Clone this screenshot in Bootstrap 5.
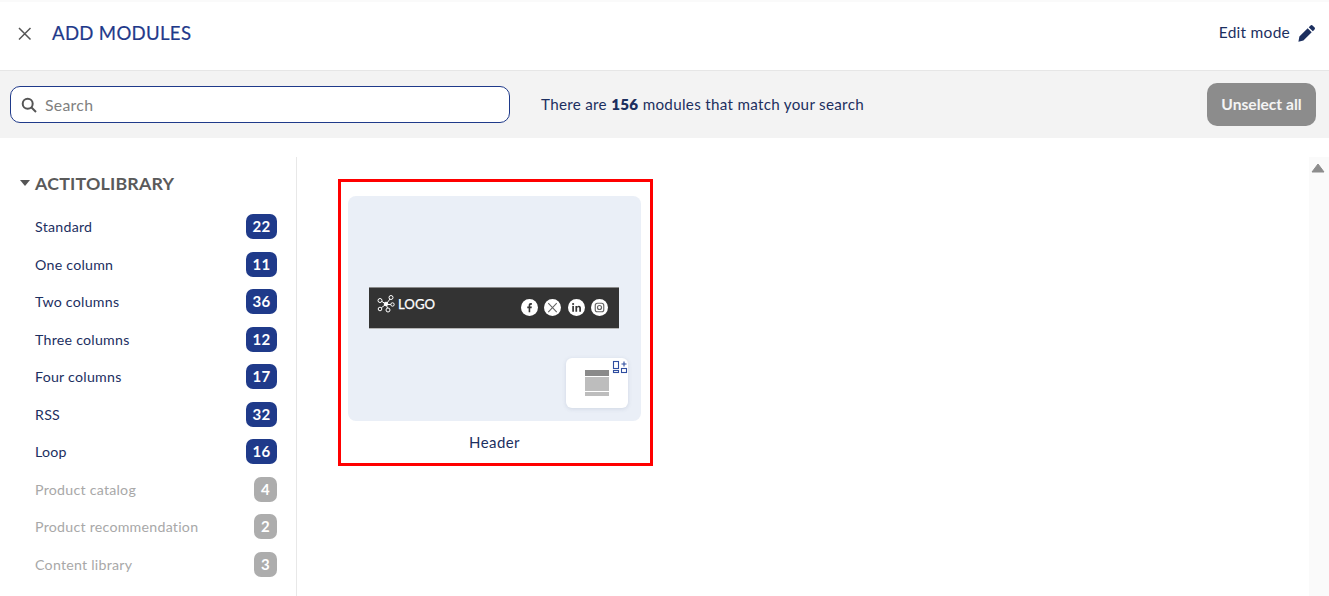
<!DOCTYPE html>
<html lang="en">
<head>
<meta charset="utf-8">
<title>Add modules</title>
<link href="https://cdn.jsdelivr.net/npm/bootstrap@5.3.0/dist/css/bootstrap.min.css" rel="stylesheet">
<style>
html,body{height:596px;overflow:hidden}
body{font-family:"Lato","Noto Sans",sans-serif;color:#1c2f5f;background:#fff;font-size:15px;letter-spacing:.25px}
.top-bar{height:71px;border-bottom:1px solid #e6e6e6;border-top:2px solid #fafafa;padding:0 14px 6px 17px}
.close-ico{width:15px;height:15px;margin-right:20px}
.page-title{font-size:18.6px;font-weight:400;color:#1f3a8a;margin:0;letter-spacing:.3px;-webkit-text-stroke:.2px #1f3a8a}
.edit-link{font-size:15.5px;color:#1c2f5f}
.filter-bar{height:67px;background:#f3f3f3;padding:0 13px 0 10px}
.search-box{width:500px;height:37px;border:1px solid #1f3a8a;border-radius:10px;background:#fff;padding:0 10px;gap:6px}
.search-box input{border:0;outline:0;width:100%;font-size:15.8px;color:#777;background:transparent;letter-spacing:.3px}
.search-box input::placeholder{color:#808080;opacity:1}
.result-text{margin-left:31px;font-size:15.2px;letter-spacing:.3px}
.result-text b{font-weight:800}
.unselect-btn{width:109px;height:43px;background:#8c8c8c;border:0;border-radius:10px;color:#f4f4f4;font-weight:700;font-size:15.6px;padding:0}
.work-area{height:458px;padding-top:19px}
.side-panel{width:297px;border-right:1px solid #e8e8e8;padding:0 19px 0 20px;flex:none}
.lib-head{font-size:17.8px;font-weight:700;color:#5a5a5a;height:26px;margin-top:13px;margin-bottom:12px;letter-spacing:.2px}
.caret-ico{width:10px;height:6px;margin-right:5px}
.cat-row{height:37.5px;padding-left:15px;font-size:14.2px}
.cat-num{width:31px;height:25px;border-radius:7px;background:#1f3a8a;color:#fff;font-size:15px;font-weight:700;padding:0;line-height:25px;text-align:center}
.cat-off{color:#a8a8a8}
.cat-off .cat-num{width:23px;background:#adadad}
.grid-zone{padding:22px 0 0 41px;min-width:0}
.pick-box{width:315px;height:287px;border:3px solid #f00;padding:14px 9px 0 7px}
.thumb{height:225px;background:#eaeff7;border-radius:8px;padding:91px 22px 0 21px;position:relative}
.hdr-banner{height:42px;background:#333;border-top:1px solid #8a8a8a;border-bottom:1px solid #b5b5b5;padding:0 11px 0 8px}
.logo-text{color:#fff;font-size:13.2px;font-weight:400;margin-left:3px;position:relative;top:-3px;letter-spacing:0;-webkit-text-stroke:.25px #fff}
.logo-ico{position:relative;top:-4px}
.soc{width:17px;height:17px;border-radius:50%;background:#fff;position:relative;top:-1px}
.soc-row{gap:6.5px}
.mini-card{position:absolute;left:218px;top:162px;width:62px;height:50px;background:#fff;border-radius:6px;box-shadow:0 1px 4px rgba(60,80,120,.15)}
.thumb-label{font-size:15px;margin-top:10px;text-align:center;letter-spacing:.4px}
.scroll-rail{width:20px;background:#fafafa;margin-left:auto;flex:none;padding:6px 0 0 2px}
</style>
</head>
<body>
<header class="top-bar d-flex align-items-center justify-content-between">
  <div class="d-flex align-items-center">
    <svg class="close-ico" viewBox="0 0 15 15" fill="none" stroke="#555" stroke-width="1.5"><path d="M2 2 13.5 13.500M13.500 2 2 13.500"/></svg>
    <h1 class="page-title">ADD MODULES</h1>
  </div>
  <div class="d-flex align-items-center gap-2 edit-link">Edit mode
    <svg width="17" height="17" viewBox="0 0 16 16" fill="#1c2f5f"><path d="M11.600.6a1.600 1.600 0 0 1 2.300 0l1.500 1.500a1.600 1.600 0 0 1 0 2.300l-1.500 1.500-3.800-3.800zM9.100 3.100l3.800 3.800-7.800 7.800-4.700 1 .9-4.800z"/></svg>
  </div>
</header>
<section class="filter-bar d-flex align-items-center">
  <div class="search-box d-flex align-items-center">
    <svg width="16" height="16" viewBox="0 0 16 16" fill="none" stroke="#555" stroke-width="2" class="flex-shrink-0"><circle cx="6.700" cy="6.700" r="5"/><path d="m10.500 10.500 4.500 4.500"/></svg>
    <input type="text" placeholder="Search">
  </div>
  <div class="result-text">There are <b>156</b> modules that match your search</div>
  <button class="unselect-btn btn ms-auto" type="button">Unselect all</button>
</section>
<main class="work-area d-flex">
  <aside class="side-panel">
    <div class="lib-head d-flex align-items-center">
      <svg class="caret-ico" viewBox="0 0 10 6" fill="#555"><path d="M0 0h10L5 6z"/></svg>ACTITOLIBRARY
    </div>
    <div class="cat-row d-flex align-items-center justify-content-between"><span>Standard</span><span class="cat-num badge">22</span></div>
    <div class="cat-row d-flex align-items-center justify-content-between"><span>One column</span><span class="cat-num badge">11</span></div>
    <div class="cat-row d-flex align-items-center justify-content-between"><span>Two columns</span><span class="cat-num badge">36</span></div>
    <div class="cat-row d-flex align-items-center justify-content-between"><span>Three columns</span><span class="cat-num badge">12</span></div>
    <div class="cat-row d-flex align-items-center justify-content-between"><span>Four columns</span><span class="cat-num badge">17</span></div>
    <div class="cat-row d-flex align-items-center justify-content-between"><span>RSS</span><span class="cat-num badge">32</span></div>
    <div class="cat-row d-flex align-items-center justify-content-between"><span>Loop</span><span class="cat-num badge">16</span></div>
    <div class="cat-row cat-off d-flex align-items-center justify-content-between"><span>Product catalog</span><span class="cat-num badge">4</span></div>
    <div class="cat-row cat-off d-flex align-items-center justify-content-between"><span>Product recommendation</span><span class="cat-num badge">2</span></div>
    <div class="cat-row cat-off d-flex align-items-center justify-content-between"><span>Content library</span><span class="cat-num badge">3</span></div>
  </aside>
  <div class="grid-zone flex-grow-1">
    <div class="pick-box">
      <div class="thumb">
        <div class="hdr-banner d-flex align-items-center justify-content-between">
          <div class="d-flex align-items-center">
            <svg class="logo-ico" width="18" height="18" viewBox="0 0 18 18" fill="none" stroke="#fff" stroke-width="1"><circle cx="9" cy="9" r="1.800" fill="#fff"/><circle cx="3" cy="5.500" r="2"/><circle cx="14" cy="2.500" r="2"/><circle cx="15.500" cy="9.500" r="1.700"/><circle cx="11" cy="15" r="2"/><circle cx="3" cy="14" r="1.800"/><path d="M5 6.500 8 8.500M13 4 10 8M13.800 9.500H10.500M10.500 13 9.500 10.500M4.300 12.800 8 10"/></svg>
            <span class="logo-text">LOGO</span>
          </div>
          <div class="d-flex soc-row">
            <svg class="soc" viewBox="0 0 16 16"><path fill="#333" d="M8.700 12.500V8.600h1.300l.2-1.500H8.700v-1c0-.5.2-.8.8-.8h.8V3.900c-.3 0-.7-.1-1.100-.1-1.200 0-2 .7-2 2v1.300H5.900v1.500h1.300v3.900z"/></svg>
            <svg class="soc" viewBox="0 0 16 16" fill="none" stroke="#666" stroke-width="1"><path d="M4 3.800l8 8.600M12 3.800l-8 8.600"/></svg>
            <svg class="soc" viewBox="0 0 16 16" fill="#333"><rect x="4" y="6.500" width="1.600" height="5.500"/><circle cx="4.800" cy="4.700" r="1"/><path d="M7 6.500h1.500v.8c.4-.6 1-.9 1.700-.9 1.500 0 2 .9 2 2.400V12h-1.600V9.100c0-.8-.2-1.300-.9-1.300-.8 0-1.100.6-1.100 1.300V12H7z"/></svg>
            <svg class="soc" viewBox="0 0 16 16" fill="none" stroke="#666" stroke-width="1.100"><rect x="4" y="4" width="8" height="8" rx="2"/><circle cx="8" cy="8" r="1.900"/></svg>
          </div>
        </div>
        <div class="mini-card">
          <svg width="62" height="50" viewBox="0 0 62 50" class="d-block">
            <rect x="19" y="12" width="24" height="6" fill="#8a8a8a"/>
            <rect x="19" y="19" width="24" height="14" fill="#bdbdbd"/>
            <rect x="19" y="34" width="24" height="4" fill="#bdbdbd"/>
            <g fill="none" stroke="#2f4ea0" stroke-width="1.100"><rect x="47.500" y="3.500" width="5" height="7"/><rect x="47.500" y="12.500" width="5" height="2"/><rect x="55.500" y="10.500" width="5" height="4"/><path d="M58 3.500v5M55.500 6h5"/></g>
          </svg>
        </div>
      </div>
      <div class="thumb-label">Header</div>
    </div>
  </div>
  <div class="scroll-rail">
    <svg width="14" height="10" viewBox="0 0 14 10" class="d-block"><path d="M7 1l6 8H1z" fill="#8c8c8c" stroke="#8c8c8c" stroke-linejoin="round"/></svg>
  </div>
</main>
<script src="https://cdn.jsdelivr.net/npm/bootstrap@5.3.0/dist/js/bootstrap.bundle.min.js"></script>
</body>
</html>
